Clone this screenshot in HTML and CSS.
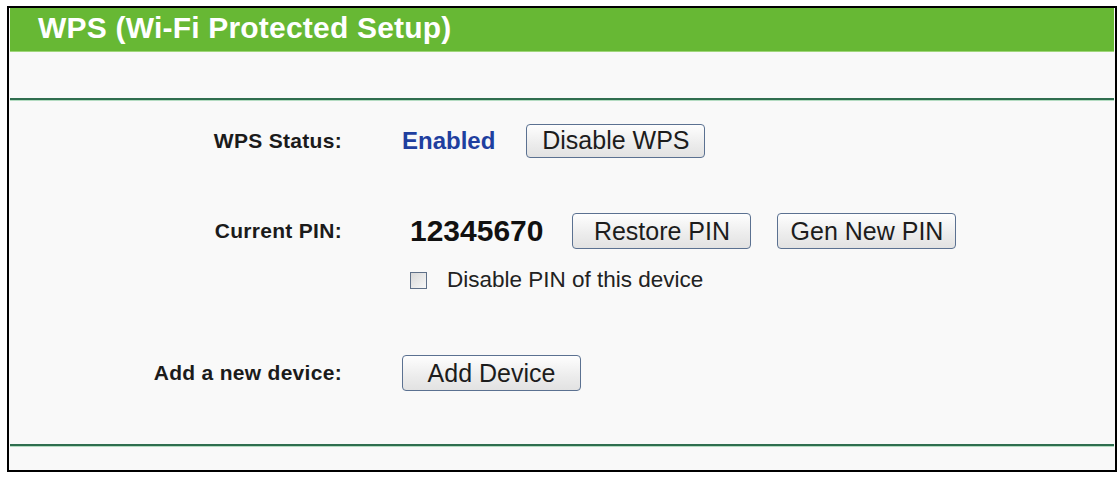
FILE: index.html
```html
<!DOCTYPE html>
<html>
<head>
<meta charset="utf-8">
<link rel="stylesheet" href="styles.css">
</head>
<body>
<div class="frame">
  <div class="header">WPS (Wi-Fi Protected Setup)</div>
  <div class="intro"></div>
  <div class="rule"></div>
  <div class="content">
    <div class="row row-status">
      <div class="label">WPS Status:</div>
      <div class="value">
        <span class="enabled">Enabled</span>
        <button class="btn btn-disable">Disable WPS</button>
      </div>
    </div>
    <div class="row row-pin">
      <div class="label">Current PIN:</div>
      <div class="value">
        <span class="pin">12345670</span>
        <button class="btn btn-restore">Restore PIN</button>
        <button class="btn btn-gen">Gen New PIN</button>
      </div>
    </div>
    <div class="row row-check">
      <div class="label"></div>
      <div class="value">
        <label class="check"><input type="checkbox" class="box"><span>Disable PIN of this device</span></label>
      </div>
    </div>
    <div class="row row-add">
      <div class="label">Add a new device:</div>
      <div class="value">
        <button class="btn btn-add">Add Device</button>
      </div>
    </div>
  </div>
  <div class="rule"></div>
  <div class="footer"></div>
</div>
</body>
</html>
```

FILE: styles.css
```css
html, body {
  margin: 0;
  padding: 0;
  background: #ffffff;
}
body {
  font-family: "Liberation Sans", Arial, sans-serif;
}
.frame {
  margin: 6px 0 0 7px;
  width: 1104px;
  height: 462px;
  border: 2px solid #000;
  padding: 0 1px;
  background: #f9f9f9;
  display: flex;
  flex-direction: column;
}
.header {
  background: #67b834;
  height: 43px;
  color: #ffffff;
  font-weight: bold;
  font-size: 30px;
  letter-spacing: 0.2px;
  line-height: 40px;
  padding-left: 28px;
  border-bottom: 1px solid #9fd67a;
}
.intro {
  height: 46px;
}
.rule {
  height: 2px;
  background: #2f6e4f;
  border-bottom: 1px solid #b4dcc2;
}
.content {
  display: flex;
  flex-direction: column;
  margin-bottom: 53px;
}
.row {
  display: flex;
  align-items: center;
}
.label {
  width: 332px;
  text-align: right;
  font-weight: bold;
  font-size: 21px;
  letter-spacing: 0.3px;
  color: #1b1b1b;
  flex: none;
}
.value {
  margin-left: 60px;
  display: flex;
  align-items: center;
}
.row-status { margin-top: 22px; height: 35px; }
.row-pin { margin-top: 55px; height: 36px; }
.row-check { margin-top: 19px; height: 24px; }
.row-add { margin-top: 63px; height: 36px; }
.enabled {
  color: #1f3f9f;
  font-weight: bold;
  font-size: 24px;
  margin-right: 31px;
}
.pin {
  margin-left: 8px;
  font-weight: bold;
  font-size: 30px;
  color: #111;
  margin-right: 29px;
}
.btn {
  width: 179px;
  height: 36px;
  border: 1px solid #5b7191;
  border-radius: 4px;
  background: linear-gradient(#fefefe, #ececec 60%, #e2e2e2);
  font-family: "Liberation Sans", Arial, sans-serif;
  font-size: 25px;
  color: #1c1c1c;
  padding: 0;
  flex: none;
}
.btn-disable { height: 34px; }
.btn-restore { margin-right: 26px; }
.check {
  margin-left: 8px;
  display: flex;
  align-items: center;
  font-size: 22.5px;
  color: #222;
}
.box {
  -webkit-appearance: none;
  appearance: none;
  width: 17px;
  height: 17px;
  margin: 0 20px 0 0;
  border: 1px solid #5f7088;
  background: linear-gradient(135deg, #d8d8d8, #f8f8f8);
  box-sizing: border-box;
}
.footer {
  flex: 1;
}
```
